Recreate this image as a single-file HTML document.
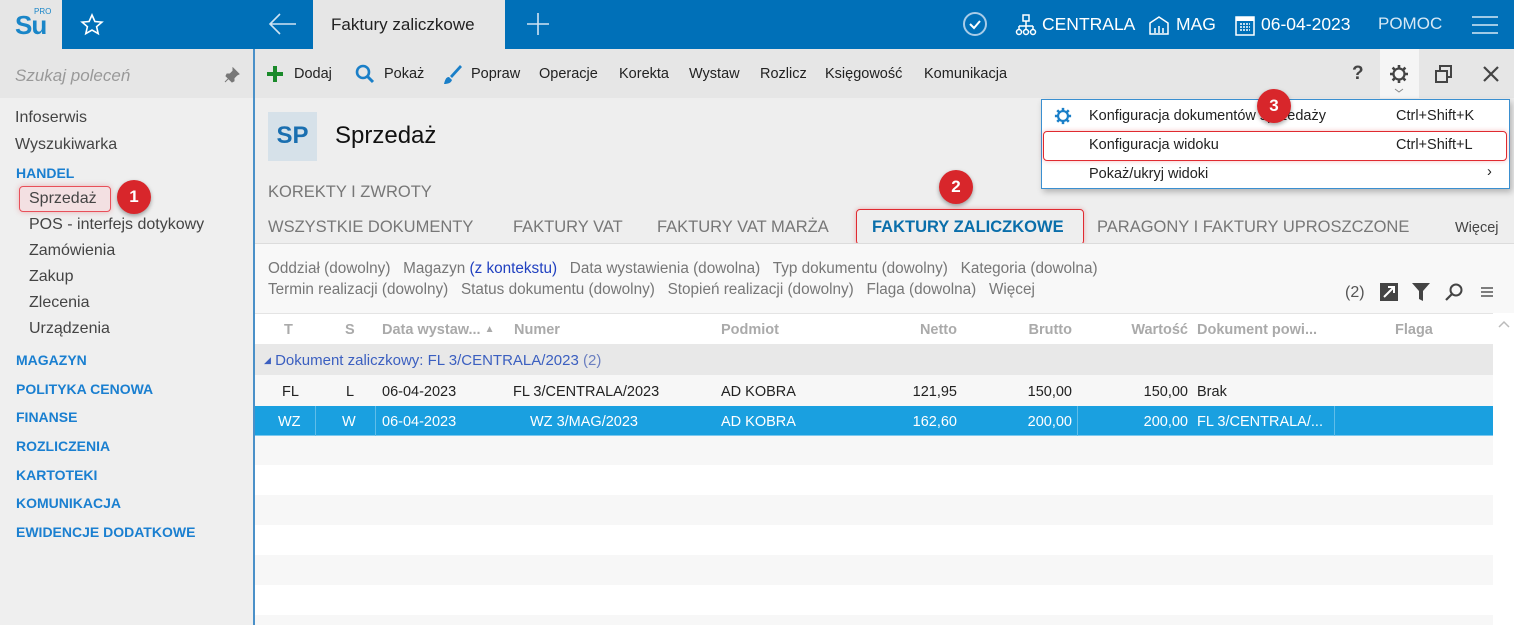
<!DOCTYPE html>
<html><head><meta charset="utf-8"><style>
*{margin:0;padding:0;box-sizing:border-box}
body{width:1514px;height:625px;overflow:hidden;position:relative;font-family:"Liberation Sans",sans-serif;background:#fff;color:#222}
.a{position:absolute;white-space:nowrap}
.top{left:0;top:0;width:1514px;height:49px;background:#0070b8}
.w{color:#fff;font-size:17px}
.side{left:0;top:49px;width:254px;height:576px;background:#efefef}
.sl{font-size:16px;color:#444}
.sh{font-size:14px;font-weight:bold;color:#1a7fd0}
.tb{font-size:14.5px;color:#222}
.tab{font-size:16.5px;color:#777}
.f{font-size:15.3px;color:#777}
.hd{font-size:14.5px;color:#aaa;font-weight:bold}
.c{font-size:14.5px;color:#222}
.r{text-align:right}
.badge{width:34px;height:34px;border-radius:50%;background:#d8262b;color:#fff;font-weight:bold;font-size:17px;text-align:center;line-height:34px;box-shadow:0 2px 4px rgba(0,0,0,.35)}
.mi{font-size:14.5px;color:#222}
</style></head><body>
<div class="a top"></div>
<div class="a" style="left:0;top:0;width:62px;height:49px;background:#e6e6e6"></div>
<div class="a" style="left:15px;top:10px;font-size:26px;font-weight:bold;color:#1a86c8;letter-spacing:-1px">Su</div>
<div class="a" style="left:34px;top:7px;font-size:8px;color:#1a86c8">PRO</div>
<svg class="a" style="left:80px;top:13px" width="24" height="24" viewBox="0 0 24 24"><path d="M12 2l2.9 6.5 7 .6-5.3 4.6 1.6 6.9L12 17l-6.2 3.6 1.6-6.9L2.1 9.1l7-.6z" fill="none" stroke="#fff" stroke-width="1.6"/></svg>
<svg class="a" style="left:268px;top:12px" width="30" height="24"><path d="M2 12h26M12 2L2 12l10 10" fill="none" stroke="#cfe3f3" stroke-width="1.6"/></svg>
<div class="a" style="left:313px;top:0;width:192px;height:49px;background:#e6e6e6"></div>
<div class="a" style="left:331px;top:15px;font-size:17px;color:#222">Faktury zaliczkowe</div>
<svg class="a" style="left:526px;top:12px" width="24" height="24"><path d="M12 1v22M1 12h22" stroke="#cfe3f3" stroke-width="1.6"/></svg>
<svg class="a" style="left:962px;top:11px" width="26" height="26"><circle cx="13" cy="13" r="11" fill="none" stroke="#a8cce8" stroke-width="2"/><path d="M8 13l4 4 6-7" fill="none" stroke="#fff" stroke-width="2"/></svg>
<svg class="a" style="left:1015px;top:14px" width="22" height="22"><rect x="8" y="1" width="6" height="6" fill="none" stroke="#fff" stroke-width="1.5"/><path d="M11 7v5M4 12h14M4 12v4M18 12v4M11 12v4" stroke="#fff" stroke-width="1.5"/><circle cx="4" cy="18" r="2.5" fill="none" stroke="#fff" stroke-width="1.5"/><circle cx="11" cy="18" r="2.5" fill="none" stroke="#fff" stroke-width="1.5"/><circle cx="18" cy="18" r="2.5" fill="none" stroke="#fff" stroke-width="1.5"/></svg>
<div class="a w" style="left:1042px;top:14px;font-size:17.5px">CENTRALA</div>
<svg class="a" style="left:1148px;top:14px" width="22" height="22"><path d="M2 9L11 3l9 6v11H2z" fill="none" stroke="#fff" stroke-width="1.5"/><path d="M7 19v-5M11 19v-7M15 19v-5" stroke="#fff" stroke-width="1.5"/></svg>
<div class="a w" style="left:1176px;top:14px;font-size:17.5px">MAG</div>
<svg class="a" style="left:1235px;top:14px" width="20" height="22"><rect x="1" y="3" width="18" height="18" fill="none" stroke="#fff" stroke-width="1.5"/><rect x="1" y="3" width="18" height="4" fill="#fff"/><path d="M5 10h10M5 13h10M5 16h10" stroke="#fff" stroke-width="1.5" stroke-dasharray="2 1"/></svg>
<div class="a w" style="left:1261px;top:14px;font-size:17.5px">06-04-2023</div>
<div class="a w" style="left:1378px;top:14px;color:#d6e8f5;font-size:17px">POMOC</div>
<svg class="a" style="left:1472px;top:15px" width="26" height="20"><path d="M0 2h26M0 10h26M0 18h26" stroke="#d6e8f5" stroke-width="1.6"/></svg>

<div class="a side"></div>
<div class="a" style="left:0;top:49px;width:254px;height:49px;background:#e6e6e6"></div>
<div class="a" style="left:15px;top:66px;font-size:17px;color:#999;font-style:italic">Szukaj poleceń</div>
<svg class="a" style="left:224px;top:67px" width="16" height="16"><path d="M9 1l6 6-2 1-3 3 0 3-2 1-6-6 1-2 3 0 3-3z M5 11l-4 4" fill="#777" stroke="#777"/></svg>
<div class="a sl" style="left:15px;top:109px">Infoserwis</div>
<div class="a sl" style="left:15px;top:136px">Wyszukiwarka</div>
<div class="a sh" style="left:16px;top:165px">HANDEL</div>
<div class="a" style="left:19px;top:186px;width:92px;height:26px;border:1.5px solid #e8505a;border-radius:4px;background:#f3e0e2;box-shadow:0 0 6px rgba(220,60,70,.35)"></div>
<div class="a sl" style="left:29px;top:190px">Sprzedaż</div>
<div class="a sl" style="left:29px;top:216px">POS - interfejs dotykowy</div>
<div class="a sl" style="left:29px;top:242px">Zamówienia</div>
<div class="a sl" style="left:29px;top:268px">Zakup</div>
<div class="a sl" style="left:29px;top:294px">Zlecenia</div>
<div class="a sl" style="left:29px;top:320px">Urządzenia</div>
<div class="a sh" style="left:16px;top:352px">MAGAZYN</div>
<div class="a sh" style="left:16px;top:381px">POLITYKA CENOWA</div>
<div class="a sh" style="left:16px;top:409px">FINANSE</div>
<div class="a sh" style="left:16px;top:438px">ROZLICZENIA</div>
<div class="a sh" style="left:16px;top:467px">KARTOTEKI</div>
<div class="a sh" style="left:16px;top:495px">KOMUNIKACJA</div>
<div class="a sh" style="left:16px;top:524px">EWIDENCJE DODATKOWE</div>
<div class="a badge" style="left:117px;top:180px">1</div>

<div class="a" style="left:253px;top:49px;width:2px;height:576px;background:#4a90c8"></div>
<div class="a" style="left:255px;top:49px;width:1259px;height:49px;background:#e6e6e6"></div>
<svg class="a" style="left:266px;top:65px" width="18" height="18"><path d="M9 1v16M1 9h16" stroke="#1a8a2a" stroke-width="4"/></svg>
<div class="a tb" style="left:294px;top:66px">Dodaj</div>
<svg class="a" style="left:355px;top:64px" width="20" height="20"><circle cx="8" cy="8" r="6" fill="none" stroke="#1a7fc8" stroke-width="2.6"/><path d="M12 12l6 6" stroke="#1a7fc8" stroke-width="3"/></svg>
<div class="a tb" style="left:384px;top:66px">Pokaż</div>
<svg class="a" style="left:442px;top:63px" width="20" height="22"><path d="M18 2L8 13l2 2L20 4z" fill="#1a7fc8"/><path d="M7 14c-3 0-4 3-5 7 4 0 7-1 8-4z" fill="#1a7fc8"/></svg>
<div class="a tb" style="left:471px;top:66px">Popraw</div>
<div class="a tb" style="left:539px;top:66px">Operacje</div>
<div class="a tb" style="left:619px;top:66px">Korekta</div>
<div class="a tb" style="left:689px;top:66px">Wystaw</div>
<div class="a tb" style="left:760px;top:66px">Rozlicz</div>
<div class="a tb" style="left:825px;top:66px">Księgowość</div>
<div class="a tb" style="left:924px;top:66px">Komunikacja</div>
<div class="a" style="left:1352px;top:63px;font-size:19px;color:#444;font-weight:bold">?</div>
<div class="a" style="left:1380px;top:49px;width:39px;height:49px;background:#f5f5f5"></div>
<svg class="a" style="left:1389px;top:64px" width="20" height="20" viewBox="0 0 20 20"><circle cx="10" cy="10" r="5.5" fill="none" stroke="#444" stroke-width="2.2"/><path d="M10 1v4M10 15v4M1 10h4M15 10h4M3.6 3.6l2.8 2.8M13.6 13.6l2.8 2.8M3.6 16.4l2.8-2.8M13.6 6.4l2.8-2.8" stroke="#444" stroke-width="2.6"/><circle cx="10" cy="10" r="2" fill="#f5f5f5"/></svg>
<svg class="a" style="left:1394px;top:88px" width="10" height="6"><path d="M1 1l4 3 4-3" fill="none" stroke="#888"/></svg>
<svg class="a" style="left:1434px;top:64px" width="20" height="20"><rect x="6" y="2" width="11" height="11" fill="none" stroke="#444" stroke-width="2"/><rect x="2" y="7" width="11" height="11" fill="#e6e6e6" stroke="#444" stroke-width="2"/></svg>
<svg class="a" style="left:1482px;top:65px" width="18" height="18"><path d="M2 2l14 14M16 2L2 16" stroke="#444" stroke-width="2.2"/></svg>

<div class="a" style="left:255px;top:98px;width:1259px;height:146px;background:#eeeeee"></div>
<div class="a" style="left:268px;top:112px;width:49px;height:49px;background:#d6e1e9"></div>
<div class="a" style="left:270px;top:122px;width:45px;text-align:center;font-size:24px;font-weight:bold;color:#1a6fb0">SP</div>
<div class="a" style="left:335px;top:122px;font-size:24px;color:#111">Sprzedaż</div>
<div class="a tab" style="left:268px;top:183px">KOREKTY I ZWROTY</div>
<div class="a tab" style="left:268px;top:218px">WSZYSTKIE DOKUMENTY</div>
<div class="a tab" style="left:513px;top:218px">FAKTURY VAT</div>
<div class="a tab" style="left:657px;top:218px">FAKTURY VAT MARŻA</div>
<div class="a" style="left:856px;top:209px;width:228px;height:36px;border:1.5px solid #e02a30;border-radius:4px;box-shadow:0 0 5px rgba(220,40,50,.35)"></div>
<div class="a tab" style="left:872px;top:218px;color:#0a6eaa;font-weight:bold">FAKTURY ZALICZKOWE</div>
<div class="a tab" style="left:1097px;top:218px">PARAGONY I FAKTURY UPROSZCZONE</div>
<div class="a tb" style="left:1455px;top:220px;color:#444">Więcej</div>
<div class="a" style="left:255px;top:243px;width:1259px;height:1px;background:#dcdcdc"></div>
<div class="a badge" style="left:939px;top:170px">2</div>

<div class="a" style="left:255px;top:244px;width:1259px;height:69px;background:#f8f8f8"></div>
<div class="a f" style="left:268px;top:260px">Oddział (dowolny)&nbsp;&nbsp; Magazyn <span style="color:#2040c0">(z kontekstu)</span>&nbsp;&nbsp; Data wystawienia (dowolna)&nbsp;&nbsp; Typ dokumentu (dowolny)&nbsp;&nbsp; Kategoria (dowolna)</div>
<div class="a f" style="left:268px;top:281px">Termin realizacji (dowolny)&nbsp;&nbsp; Status dokumentu (dowolny)&nbsp;&nbsp; Stopień realizacji (dowolny)&nbsp;&nbsp; Flaga (dowolna)&nbsp;&nbsp; Więcej</div>
<div class="a f" style="left:1345px;top:284px;font-size:16px;color:#555">(2)</div>
<svg class="a" style="left:1380px;top:283px" width="18" height="18"><rect x="0" y="0" width="18" height="18" fill="#444"/><path d="M4 14L14 4M8 4h6v6" stroke="#fff" stroke-width="2" fill="none"/></svg>
<svg class="a" style="left:1412px;top:283px" width="18" height="18"><path d="M0 0h18l-7 8v10l-4-2V8z" fill="#444"/></svg>
<svg class="a" style="left:1445px;top:283px" width="18" height="18"><circle cx="11" cy="7" r="5.5" fill="none" stroke="#444" stroke-width="2"/><path d="M7 11l-6 6" stroke="#444" stroke-width="2.2"/></svg>
<svg class="a" style="left:1481px;top:287px" width="12" height="10"><path d="M0 1h12M0 5h12M0 9h12" stroke="#555" stroke-width="1.4"/></svg>

<div class="a" style="left:255px;top:313px;width:1238px;height:312px;background:#fff"></div>
<div class="a" style="left:255px;top:313px;width:1238px;height:1px;background:#e4e4e4"></div>
<div class="a hd" style="left:284px;top:322px">T</div>
<div class="a hd" style="left:345px;top:322px">S</div>
<div class="a hd" style="left:382px;top:322px">Data wystaw... <span style="font-size:10px;vertical-align:2px">&#9650;</span></div>
<div class="a hd" style="left:514px;top:322px">Numer</div>
<div class="a hd" style="left:721px;top:322px">Podmiot</div>
<div class="a hd r" style="left:857px;top:322px;width:100px">Netto</div>
<div class="a hd r" style="left:972px;top:322px;width:100px">Brutto</div>
<div class="a hd r" style="left:1088px;top:322px;width:100px">Wartość</div>
<div class="a hd" style="left:1197px;top:322px">Dokument powi...</div>
<div class="a hd" style="left:1395px;top:322px">Flaga</div>
<svg class="a" style="left:1498px;top:320px" width="12" height="8"><path d="M1 7l5-5 5 5" fill="none" stroke="#bbb" stroke-width="1.5"/></svg>
<div class="a" style="left:255px;top:344px;width:1238px;height:31px;background:#e8e8e8"></div>
<div class="a" style="left:264px;top:352px;font-size:15px;color:#3b5fc0"><span style="font-size:9px;vertical-align:2px">&#9698;</span> Dokument zaliczkowy: FL 3/CENTRALA/2023 <span style="color:#6b7fc0">(2)</span></div>
<div class="a" style="left:255px;top:375px;width:1238px;height:31px;background:#f7f7f7"></div>
<div class="a c" style="left:282px;top:384px">FL</div>
<div class="a c" style="left:346px;top:384px">L</div>
<div class="a c" style="left:382px;top:384px">06-04-2023</div>
<div class="a c" style="left:513px;top:384px">FL 3/CENTRALA/2023</div>
<div class="a c" style="left:721px;top:384px">AD KOBRA</div>
<div class="a c r" style="left:857px;top:384px;width:100px">121,95</div>
<div class="a c r" style="left:972px;top:384px;width:100px">150,00</div>
<div class="a c r" style="left:1088px;top:384px;width:100px">150,00</div>
<div class="a c" style="left:1197px;top:384px">Brak</div>
<div class="a" style="left:255px;top:406px;width:1238px;height:30px;background:#1aa0e0"></div>
<div class="a" style="left:255px;top:435px;width:1238px;height:1px;background:#7cc8ee"></div>
<div class="a" style="left:315px;top:406px;width:1px;height:30px;background:#60bde9"></div>
<div class="a" style="left:375px;top:406px;width:1px;height:30px;background:#60bde9"></div>
<div class="a" style="left:1077px;top:406px;width:1px;height:30px;background:#60bde9"></div>
<div class="a" style="left:1334px;top:406px;width:1px;height:30px;background:#60bde9"></div>
<div class="a c" style="left:278px;top:414px;color:#fff">WZ</div>
<div class="a c" style="left:342px;top:414px;color:#fff">W</div>
<div class="a c" style="left:382px;top:414px;color:#fff">06-04-2023</div>
<div class="a c" style="left:530px;top:414px;color:#fff">WZ 3/MAG/2023</div>
<div class="a c" style="left:721px;top:414px;color:#fff">AD KOBRA</div>
<div class="a c r" style="left:857px;top:414px;width:100px;color:#fff">162,60</div>
<div class="a c r" style="left:972px;top:414px;width:100px;color:#fff">200,00</div>
<div class="a c r" style="left:1088px;top:414px;width:100px;color:#fff">200,00</div>
<div class="a c" style="left:1197px;top:414px;color:#fff">FL 3/CENTRALA/...</div>
<div class="a" style="left:255px;top:436px;width:1238px;height:29px;background:#f7f7f7"></div>
<div class="a" style="left:255px;top:495px;width:1238px;height:30px;background:#f7f7f7"></div>
<div class="a" style="left:255px;top:555px;width:1238px;height:30px;background:#f7f7f7"></div>
<div class="a" style="left:255px;top:615px;width:1238px;height:10px;background:#f7f7f7"></div>

<div class="a" style="left:1041px;top:99px;width:469px;height:90px;background:#fff;border:1px solid #3a8fd0;box-shadow:2px 3px 6px rgba(0,0,0,.25)"></div>
<svg class="a" style="left:1054px;top:107px" width="18" height="18" viewBox="0 0 20 20"><circle cx="10" cy="10" r="5.5" fill="none" stroke="#1a7fc8" stroke-width="2.4"/><path d="M10 1v4M10 15v4M1 10h4M15 10h4M3.6 3.6l2.8 2.8M13.6 13.6l2.8 2.8M3.6 16.4l2.8-2.8M13.6 6.4l2.8-2.8" stroke="#1a7fc8" stroke-width="2.8"/></svg>
<div class="a mi" style="left:1089px;top:108px">Konfiguracja dokumentów sprzedaży</div>
<div class="a mi" style="left:1396px;top:108px">Ctrl+Shift+K</div>
<div class="a" style="left:1043px;top:131px;width:464px;height:30px;border:1.5px solid #e02a30;border-radius:4px;box-shadow:0 0 5px rgba(220,40,50,.3)"></div>
<div class="a mi" style="left:1089px;top:137px">Konfiguracja widoku</div>
<div class="a mi" style="left:1396px;top:137px">Ctrl+Shift+L</div>
<div class="a mi" style="left:1089px;top:166px">Pokaż/ukryj widoki</div>
<div class="a mi" style="left:1487px;top:164px">›</div>
<div class="a badge" style="left:1257px;top:89px">3</div>
</body></html>
